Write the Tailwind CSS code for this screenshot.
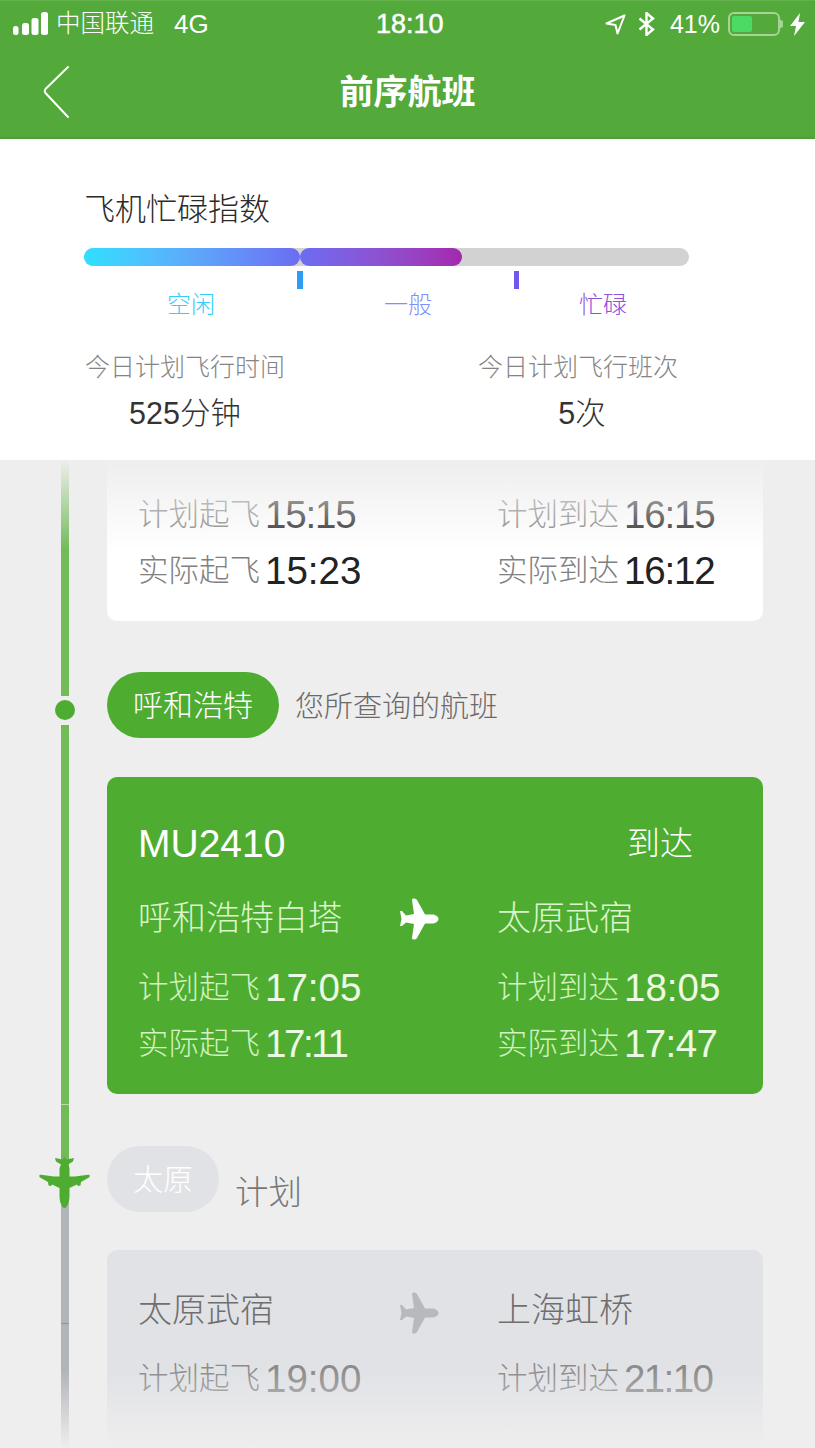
<!DOCTYPE html>
<html lang="zh-CN">
<head>
<meta charset="UTF-8">
<title>前序航班</title>
<script src="https://cdn.jsdelivr.net/npm/@tailwindcss/browser@4"></script>
</head>
<body class="bg-[#eeeeee] font-light font-['Liberation_Sans','Noto_Sans_CJK_SC',sans-serif]">
<div class="w-[815px] h-[1448px] overflow-hidden flex flex-col">

  <!-- header -->
  <header class="h-[139px] shrink-0 bg-[#53a93a] border-t border-[#63b24b] text-white">
    <div class="h-[46px] flex items-center pl-[13px] pr-[10px] relative">
      <svg class="-mt-[2px]" width="36" height="23" viewBox="0 0 36 23" fill="#fff"><rect x="0" y="14" width="5.5" height="9" rx="2.5"/><rect x="9" y="11" width="7" height="12" rx="2.5"/><rect x="18.5" y="6" width="7" height="17" rx="2.5"/><rect x="28" y="0" width="7" height="23" rx="2.5"/></svg>
      <span class="ml-[7px] text-[24.5px] leading-[30px]">中国联通</span>
      <span class="ml-[20px] text-[26px] leading-[30px]">4G</span>
      <span class="absolute left-[376px] top-[8px] text-[27px] leading-[30px] [-webkit-text-stroke:0.5px_#fff]">18:10</span>
      <div class="ml-auto flex items-center">
        <svg width="21" height="21" viewBox="0 0 21 21" fill="none" stroke="#fff" stroke-width="2"><path d="M19.5 1.5 L1.5 9.5 L10.5 11 L12.5 19.5 Z" stroke-linejoin="round"/></svg>
        <svg class="ml-[12px]" width="17" height="24" viewBox="0 0 17 24" fill="none" stroke="#fff" stroke-width="2.4"><path d="M1.5 6.5 L15 17.5 L8.5 23 V1 L15 6.5 L1.5 17.5"/></svg>
        <span class="ml-[15px] text-[25px] leading-[30px]">41%</span>
        <div class="ml-[8px] w-[52px] h-[24px] rounded-[6px] border-2 border-[#a6d496] p-[2px]">
          <div class="w-[20px] h-full rounded-[2px] bg-[#4cd964]"></div>
        </div>
        <div class="w-[3px] h-[8px] rounded-r-[2px] bg-[#a6d496]"></div>
        <svg class="ml-[7px]" width="15" height="23" viewBox="0 0 15 23" fill="#fff"><path d="M10 0 L0 13 H6 L4 23 L15 9 H8.5 Z"/></svg>
      </div>
    </div>
    <div class="h-[92px] relative flex items-center justify-center">
      <svg class="absolute left-[42px] top-[18px]" width="28" height="54" viewBox="0 0 28 54" fill="none" stroke="#fff" stroke-width="2"><path d="M26 2 L3.5 24 Q2 26 3.5 28 L26 52" stroke-linecap="round"/></svg>
      <h1 class="text-[34px] leading-[40px] font-bold -mt-[2px]">前序航班</h1>
    </div>
  </header>

  <!-- summary panel -->
  <section class="h-[321px] shrink-0 bg-white pl-[84px] pt-[53px] shadow-[0_-1px_2px_rgba(0,0,0,0.12)]">
    <h2 class="text-[31px] leading-[36px] text-[#2a2a2a]">飞机忙碌指数</h2>
    <div class="mt-[20px] w-[605px] h-[18px] rounded-full bg-[#d2d2d2] flex">
      <div class="w-[216px] rounded-full bg-gradient-to-r from-[#2be0ff] to-[#6b6cf3]"></div>
      <div class="w-[162px] rounded-full bg-gradient-to-r from-[#6b6cf3] to-[#a427ae]"></div>
    </div>
    <div class="mt-[5px] flex h-[18px]">
      <div class="ml-[213px] w-[6px] bg-[#2e9bf5]"></div>
      <div class="ml-[211px] w-[5px] bg-[#7257ee]"></div>
    </div>
    <div class="mt-[1px] flex text-[24px] leading-[30px]">
      <span class="ml-[83px] text-[#35cdfb]">空闲</span>
      <span class="ml-[169px] text-[#7f8ffb]">一般</span>
      <span class="ml-[147px] text-[#9150dc]">忙碌</span>
    </div>
    <div class="mt-[31px] flex">
      <div class="w-[393px]">
        <p class="w-[202px] text-center text-[25px] leading-[32px] text-[#858585]">今日计划飞行时间</p>
        <p class="w-[202px] mt-[12px] text-center text-[30.5px] leading-[36px] text-[#333333]">525分钟</p>
      </div>
      <div class="w-[202px]">
        <p class="text-center text-[25px] leading-[32px] text-[#858585]">今日计划飞行班次</p>
        <p class="mt-[12px] pl-[8px] text-center text-[30.5px] leading-[36px] text-[#333333]">5次</p>
      </div>
    </div>
  </section>

  <!-- timeline -->
  <section class="relative flex-1 flex overflow-hidden">
    <div class="ml-[61px] w-[8px] shrink-0 flex flex-col">
      <div class="h-[236px] bg-[#72bb59] shrink-0"></div>
      <div class="h-[29px] shrink-0 relative">
        <div class="absolute left-[-6px] top-[4px] w-[20px] h-[20px] rounded-full bg-[#4ead31]"></div>
      </div>
      <div class="h-[380px] bg-[#72bb59] shrink-0 border-b border-[#b5dca7]"></div>
      <div class="h-[90px] bg-[#72bb59] shrink-0 relative">
        <svg class="absolute left-[-22px] top-[51px]" width="51" height="52" viewBox="0 0 51 52" fill="#4ead31"><path d="M25.5 52 C23 52 20.5 46 20.5 40 V32 L13 28.5 L12 30 L9.5 29.5 L9 26 L1 21.5 C-0.5 20 0.5 18.3 2 18.8 L15 20.5 L20.5 20.5 V12 L22 8.5 L17 5.5 L16 2 L23.5 3.5 L25.5 1 L27.5 3.5 L35 2 L34 5.5 L29 8.5 L30.5 12 V20.5 L36 20.5 L49 18.8 C50.5 18.3 51.5 20 50 21.5 L42 26 L41.5 29.5 L39 30 L38 28.5 L30.5 32 V40 C30.5 46 28 52 25.5 52 Z"/></svg>
      </div>
      <div class="h-[129px] shrink-0 bg-[#b1b4b8] border-b border-[#8f9296]"></div>
      <div class="flex-1 bg-[#b1b4b8]"></div>
    </div>

    <div class="ml-[38px] w-[656px] shrink-0 flex flex-col">
      <!-- previous flight, scrolled under the panel -->
      <div class="h-[161px] shrink-0 bg-white rounded-b-[10px] pt-[33px] pl-[31px]">
        <div class="grid grid-cols-[359px_1fr] gap-y-[12px]">
          <div class="flex items-center h-[44px]"><span class="text-[30.5px] text-[#808080]">计划起飞</span><span class="ml-[5px] text-[38.5px] tracking-[-1.2px] text-[#222222]">15:15</span></div>
          <div class="flex items-center h-[44px]"><span class="text-[30.5px] text-[#808080]">计划到达</span><span class="ml-[5px] text-[38.5px] tracking-[-1.2px] text-[#222222]">16:15</span></div>
          <div class="flex items-center h-[44px]"><span class="text-[30.5px] text-[#808080]">实际起飞</span><span class="ml-[5px] text-[38.5px] text-[#222222]">15:23</span></div>
          <div class="flex items-center h-[44px]"><span class="text-[30.5px] text-[#808080]">实际到达</span><span class="ml-[5px] text-[38.5px] tracking-[-1.2px] text-[#222222]">16:12</span></div>
        </div>
      </div>

      <div class="mt-[51px] flex items-center">
        <span class="w-[172px] h-[66px] rounded-full bg-[#4ead31] text-white text-[30px] flex items-center justify-center">呼和浩特</span>
        <span class="ml-[16px] mt-[5px] text-[29px] text-[#6a6a6a]">您所查询的航班</span>
      </div>

      <!-- queried flight -->
      <div class="mt-[39px] h-[317px] shrink-0 bg-[#4ead31] rounded-[10px] pl-[31px] pt-[44px]">
        <div class="grid grid-cols-[359px_1fr] h-[46px] items-center text-white">
          <span class="text-[39px] leading-[46px]">MU2410</span>
          <span class="ml-[130px] text-[33px] leading-[46px]">到达</span>
        </div>
        <div class="mt-[26px] grid grid-cols-[261px_98px_1fr] h-[44px] items-center text-[#dcf5cd] text-[34px]">
          <span>呼和浩特白塔</span>
          <svg width="40" height="42" viewBox="0 0 40 42" fill="#fff"><path d="M39.5 21 C39.5 23.5 36 25.5 33 25.5 L26 25.5 L18 40 C16.5 42 13 42 13 40 L15 26 L7 24.5 L3 28 L1 28 L2.5 21 L1 13 L3 13 L7 17.5 L15 16 L13 2 C13 0 16.5 0 18 2 L26 16.5 L33 16.5 C36 16.5 39.5 18.5 39.5 21 Z"/></svg>
          <span>太原武宿</span>
        </div>
        <div class="mt-[29px] grid grid-cols-[359px_1fr] gap-y-[12px]">
          <div class="flex items-center h-[44px]"><span class="text-[30.5px] text-[#d3f2bf]">计划起飞</span><span class="ml-[5px] text-[38.5px] text-[#ecf9e3]">17:05</span></div>
          <div class="flex items-center h-[44px]"><span class="text-[30.5px] text-[#d3f2bf]">计划到达</span><span class="ml-[5px] text-[38.5px] text-[#ecf9e3]">18:05</span></div>
          <div class="flex items-center h-[44px]"><span class="text-[30.5px] text-[#d3f2bf]">实际起飞</span><span class="ml-[5px] text-[38.5px] tracking-[-2.4px] text-[#ecf9e3]">17:11</span></div>
          <div class="flex items-center h-[44px]"><span class="text-[30.5px] text-[#d3f2bf]">实际到达</span><span class="ml-[5px] text-[38.5px] tracking-[-0.6px] text-[#ecf9e3]">17:47</span></div>
        </div>
      </div>

      <div class="mt-[52px] flex items-start">
        <span class="w-[112px] h-[66px] rounded-full bg-[#e1e2e6] text-white text-[30px] flex items-center justify-center">太原</span>
        <span class="ml-[16px] mt-[25px] text-[33.5px] leading-[44px] text-[#777777]">计划</span>
      </div>

      <!-- next flight -->
      <div class="mt-[35px] h-[220px] shrink-0 bg-[#e1e2e6] rounded-[10px] pl-[31px] pt-[35px]">
        <div class="grid grid-cols-[261px_98px_1fr] h-[44px] items-center text-[#6f6f6f] text-[34px]">
          <span>太原武宿</span>
          <svg class="mt-[5px]" width="40" height="42" viewBox="0 0 40 42" fill="#b6b9bd"><path d="M39.5 21 C39.5 23.5 36 25.5 33 25.5 L26 25.5 L18 40 C16.5 42 13 42 13 40 L15 26 L7 24.5 L3 28 L1 28 L2.5 21 L1 13 L3 13 L7 17.5 L15 16 L13 2 C13 0 16.5 0 18 2 L26 16.5 L33 16.5 C36 16.5 39.5 18.5 39.5 21 Z"/></svg>
          <span>上海虹桥</span>
        </div>
        <div class="mt-[28px] grid grid-cols-[359px_1fr]">
          <div class="flex items-center h-[44px]"><span class="text-[30.5px] text-[#8c8c8c]">计划起飞</span><span class="ml-[5px] text-[38.5px] text-[#8c8c8c]">19:00</span></div>
          <div class="flex items-center h-[44px]"><span class="text-[30.5px] text-[#8c8c8c]">计划到达</span><span class="ml-[5px] text-[38.5px] tracking-[-1.6px] text-[#8c8c8c]">21:10</span></div>
        </div>
      </div>
    </div>

    <!-- scroll fades -->
    <div class="absolute inset-x-0 top-0 h-[90px] bg-gradient-to-b from-[#eeeeee] to-transparent"></div>
    <div class="absolute inset-x-0 bottom-0 h-[78px] bg-gradient-to-t from-[#eeeeee] to-transparent"></div>
  </section>
</div>
</body>
</html>
